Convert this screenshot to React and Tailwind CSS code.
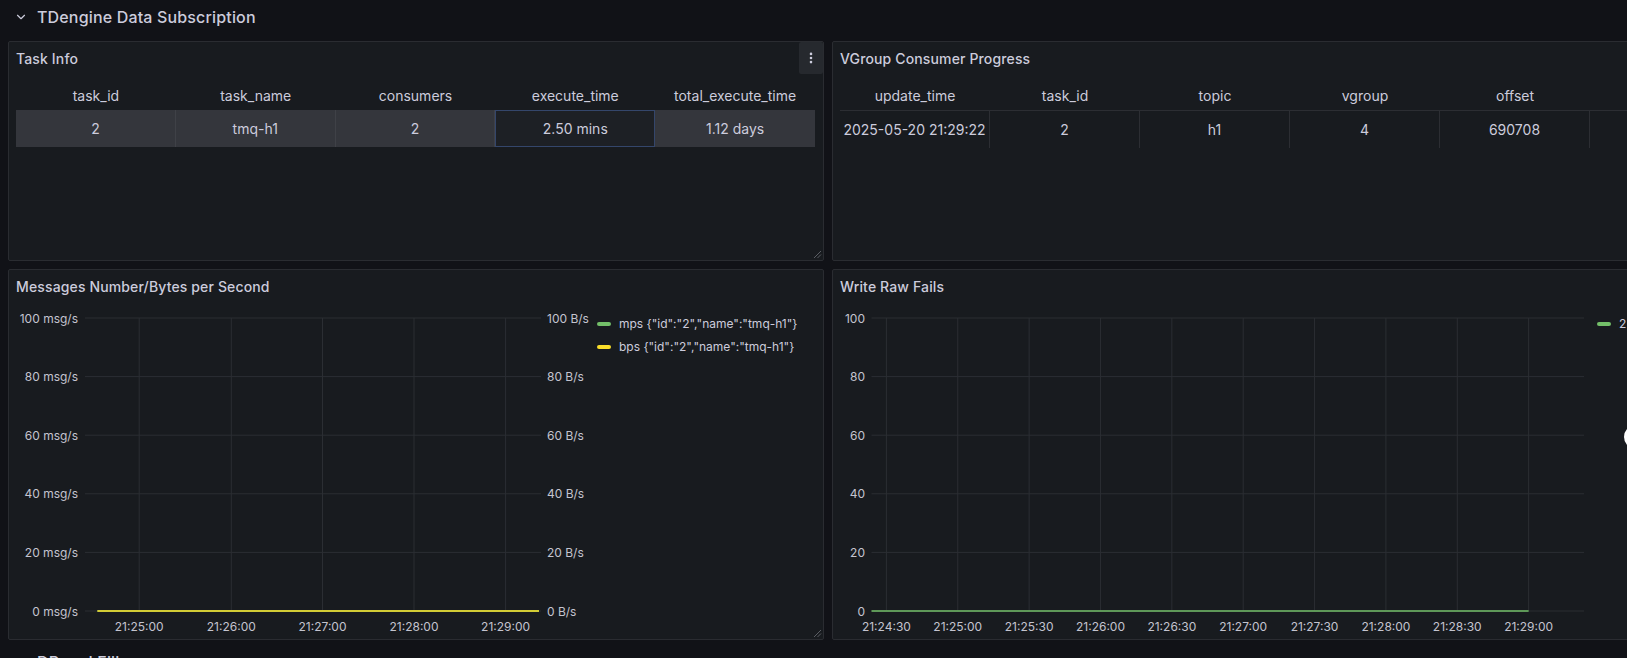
import React from 'react';
import { ChevronDown, EllipsisVertical } from 'lucide-react';

const GREEN = '#73bf69';
const YELLOW = '#fade2a';
const GRID = '#2b2e33';
const AXIS_TEXT = '#c4c4cf';

const ResizeHandle = () => (
  <svg width="9" height="9" viewBox="0 0 9 9" className="absolute bottom-[1px] right-[1px]">
    <line x1="1" y1="8" x2="8" y2="1" stroke="#5b5e64" strokeWidth="1" />
    <line x1="4.5" y1="8" x2="8" y2="4.5" stroke="#5b5e64" strokeWidth="1" />
  </svg>
);

const Panel = ({ title, menu, resize, children }) => (
  <div className="relative flex min-w-0 flex-col overflow-hidden rounded-[2px] border border-[#2a2c31] bg-[#181b1f]">
    <div className="flex h-8 shrink-0 items-center pl-[7px] text-[14px] font-medium tracking-[0.01em] text-[#ccccdc]">{title}</div>
    {menu && (
      <button className="absolute right-0 top-0 flex h-8 w-6 items-center justify-center rounded-[2px] bg-[#26292e] text-[#ccccdc]">
        <EllipsisVertical size={14} strokeWidth={2.5} />
      </button>
    )}
    <div className="flex min-h-0 flex-1">{children}</div>
    {resize && <ResizeHandle />}
  </div>
);

const taskCols = ['task_id', 'task_name', 'consumers', 'execute_time', 'total_execute_time'];
const taskRow = ['2', 'tmq-h1', '2', '2.50 mins', '1.12 days'];

const TaskTable = () => (
  <div className="w-full pl-[7px] pr-2 pt-[6px]">
    <div className="grid grid-cols-5 text-[14px] text-[#ccccdc]">
      {taskCols.map((c) => (
        <div key={c} className="flex h-[30px] items-center justify-center">{c}</div>
      ))}
    </div>
    <div className="grid grid-cols-5 text-[14px] text-[#ccccdc]">
      {taskRow.map((v, i) =>
        i === 3 ? (
          <div key={i} className="flex h-[37px] items-center justify-center border border-[#34466b] bg-[#1d2025]">{v}</div>
        ) : (
          <div key={i} className="flex h-[37px] items-center justify-center border-r border-[#3f4147] bg-[#34363c] last:border-r-0">{v}</div>
        )
      )}
    </div>
  </div>
);

const vgCols = ['update_time', 'task_id', 'topic', 'vgroup', 'offset', ''];
const vgRow = ['2025-05-20 21:29:22', '2', 'h1', '4', '690708', ''];

const VGroupTable = () => (
  <div className="w-full pl-[7px] pt-[6px]">
    <div className="grid grid-cols-[repeat(6,150px)] border-b border-[#2c2e33] text-[14px] text-[#ccccdc]">
      {vgCols.map((c, i) => (
        <div key={i} className="flex h-[30px] items-center justify-center">{c}</div>
      ))}
    </div>
    <div className="grid grid-cols-[repeat(6,150px)] text-[14px] text-[#ccccdc]">
      {vgRow.map((v, i) => (
        <div key={i} className="flex h-[37px] items-center justify-center whitespace-nowrap border-r border-[#2c2e33]">{v}</div>
      ))}
    </div>
  </div>
);

const yPos = [16, 74.6, 133.2, 191.8, 250.4, 309];

const Legend = ({ items, className }) => (
  <div className={`flex flex-col pt-[10px] text-[12px] text-[#ccccdc] ${className}`}>
    {items.map((it) => (
      <div key={it.label} className="flex h-[23px] items-center gap-2 whitespace-nowrap">
        <span className="h-[4px] w-[14px] rounded-full" style={{ background: it.color }} />
        <span>{it.label}</span>
      </div>
    ))}
  </div>
);

const MessagesChart = () => {
  const left = ['100 msg/s', '80 msg/s', '60 msg/s', '40 msg/s', '20 msg/s', '0 msg/s'];
  const right = ['100 B/s', '80 B/s', '60 B/s', '40 B/s', '20 B/s', '0 B/s'];
  const xs = [130.2, 222.3, 313.5, 405, 496.6];
  const times = ['21:25:00', '21:26:00', '21:27:00', '21:28:00', '21:29:00'];
  return (
    <svg width="583" height="337" className="block shrink-0" fontFamily="Inter, sans-serif" fontSize="12">
      {yPos.map((y, i) => (
        <g key={i}>
          <line x1="76" x2="532" y1={y} y2={y} stroke={GRID} />
          <text x="69" y={y} textAnchor="end" dominantBaseline="central" fill={AXIS_TEXT}>{left[i]}</text>
          <text x="538" y={y} dominantBaseline="central" fill={AXIS_TEXT}>{right[i]}</text>
        </g>
      ))}
      {xs.map((x, i) => (
        <g key={i}>
          <line x1={x} x2={x} y1="16" y2="309" stroke={GRID} />
          <text x={x} y="324" textAnchor="middle" dominantBaseline="central" fill={AXIS_TEXT}>{times[i]}</text>
        </g>
      ))}
      <line x1="88.4" x2="530" y1="309" y2="309" stroke={GREEN} strokeWidth="1.5" />
      <line x1="88.4" x2="530" y1="309" y2="309" stroke={YELLOW} strokeWidth="1.5" />
    </svg>
  );
};

const FailsChart = () => {
  const labels = ['100', '80', '60', '40', '20', '0'];
  const times = ['21:24:30', '21:25:00', '21:25:30', '21:26:00', '21:26:30', '21:27:00', '21:27:30', '21:28:00', '21:28:30', '21:29:00'];
  const xs = times.map((_, i) => 53.4 + i * 71.36);
  return (
    <svg width="758" height="337" className="block shrink-0" fontFamily="Inter, sans-serif" fontSize="12">
      {yPos.map((y, i) => (
        <g key={i}>
          <line x1="38.5" x2="751" y1={y} y2={y} stroke={GRID} />
          <text x="32" y={y} textAnchor="end" dominantBaseline="central" fill={AXIS_TEXT}>{labels[i]}</text>
        </g>
      ))}
      {xs.map((x, i) => (
        <g key={i}>
          <line x1={x} x2={x} y1="16" y2="309" stroke={GRID} />
          <text x={x} y="324" textAnchor="middle" dominantBaseline="central" fill={AXIS_TEXT}>{times[i]}</text>
        </g>
      ))}
      <line x1="38.5" x2={xs[9]} y1="309" y2="309" stroke={GREEN} strokeWidth="1.5" />
    </svg>
  );
};

const RowHeader = ({ title, className }) => (
  <div className={`flex items-center pl-[14px] text-[16px] font-medium tracking-[0.01em] text-[#ccccdc] ${className}`}>
    <ChevronDown size={14} strokeWidth={2} />
    <span className="ml-[9px]">{title}</span>
  </div>
);

export default function App() {
  return (
    <div className="relative h-[658px] w-[1627px] overflow-hidden bg-[#111217] font-['Inter',sans-serif]">
      <RowHeader title="TDengine Data Subscription" className="h-[34px]" />
      <div className="mt-[7px] grid w-[1656px] grid-cols-[816px_816px] grid-rows-[220px_371px] gap-2 px-2">
        <Panel title="Task Info" menu resize>
          <TaskTable />
        </Panel>
        <Panel title="VGroup Consumer Progress">
          <VGroupTable />
        </Panel>
        <Panel title="Messages Number/Bytes per Second" resize>
          <MessagesChart />
          <Legend
            className="ml-[5px]"
            items={[
              { label: 'mps {"id":"2","name":"tmq-h1"}', color: GREEN },
              { label: 'bps {"id":"2","name":"tmq-h1"}', color: YELLOW },
            ]}
          />
        </Panel>
        <Panel title="Write Raw Fails">
          <FailsChart />
          <Legend className="ml-[6px]" items={[{ label: '2', color: GREEN }]} />
        </Panel>
      </div>
      <RowHeader title="DB and Fill" className="mt-2 h-[28px]" />
      <div className="absolute left-[1624px] top-[425px] h-6 w-6 rounded-full bg-white" />
    </div>
  );
}
